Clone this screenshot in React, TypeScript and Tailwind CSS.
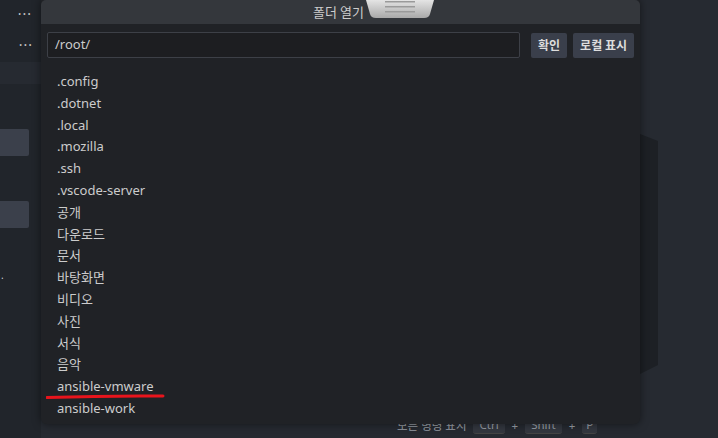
import React from "react";

const items = [
  ".config",
  ".dotnet",
  ".local",
  ".mozilla",
  ".ssh",
  ".vscode-server",
  "공개",
  "다운로드",
  "문서",
  "바탕화면",
  "비디오",
  "사진",
  "서식",
  "음악",
  "ansible-vmware",
  "ansible-work",
];

const font = { fontFamily: '"Noto Sans", "Noto Sans CJK KR", sans-serif' };

export default function App() {
  return (
    <div
      className="relative w-[718px] h-[438px] overflow-hidden bg-[#262a31] text-[#cccccc]"
      style={font}
    >
      {/* background workbench */}
      <div className="flex h-full">
        <div className="w-[41px] h-full bg-[#21252b] flex flex-col">
          <div className="h-[26px] flex items-center justify-end pr-[9px] text-[14px] tracking-[1px] text-[#c5c5c5]">···</div>
          <div className="h-[36px] flex items-center justify-end pr-[8px] text-[14px] tracking-[1px] text-[#c5c5c5]">···</div>
          <div className="h-[22px] bg-[#262a31]"></div>
          <div className="h-[45px]"></div>
          <div className="h-[27px] w-[29px] bg-[#3b404b] rounded-r-[2px]"></div>
          <div className="h-[45px]"></div>
          <div className="h-[27px] w-[29px] bg-[#3b404b] rounded-r-[2px]"></div>
          <div className="h-[40px]"></div>
          <div className="text-[10px] pl-[1px]">.</div>
        </div>
        <div className="flex-1 relative">
          {/* bottom hint */}
          <div className="absolute left-[356px] top-[416px] flex items-center gap-[7px] text-[11.5px] text-[#9aa0a8]">
            <span>모든 명령 표시</span>
            <span className="px-[6px] bg-[#33373f] rounded-[3px] border-b border-[#444]">Ctrl</span>
            <span>+</span>
            <span className="px-[6px] bg-[#33373f] rounded-[3px] border-b border-[#444]">Shift</span>
            <span>+</span>
            <span className="px-[4px] bg-[#33373f] rounded-[3px] border-b border-[#444]">P</span>
          </div>
          {/* dark side shape */}
          <div
            className="absolute left-[599px] top-[134px] w-[18px] h-[240px] bg-[#1d2025]"
            style={{ clipPath: "polygon(0 0, 100% 7px, 100% calc(100% - 9px), 0 100%)" }}
          ></div>
        </div>
      </div>

      {/* modal */}
      <div className="absolute left-[41px] top-0 w-[599px] h-[424px] bg-[#202226] rounded-b-[6px] shadow-[0_0_8px_rgba(0,0,0,0.5)] flex flex-col">
        <div className="h-[24px] bg-[#34373c] rounded-t-[5px] flex items-center justify-center text-[13px] text-[#cccccc]">
          <span className="mr-[4px]" style={{ fontFamily: '"Noto Sans CJK KR", sans-serif' }}>폴더 열기</span>
        </div>
        <div className="flex items-center px-[6px] pt-[8px]">
          <div className="w-[473px] h-[26px] bg-[#1d1e21] border border-[#3d4047] rounded-[2px] flex items-center pl-[7px] text-[13px] text-[#cccccc]">
            /root/
          </div>
          <div className="ml-[11px] h-[25px] px-[7px] bg-[#3a3f4b] rounded-[2px] flex items-center text-[12px] font-bold text-[#dddddd]" style={{ fontFamily: '"Noto Sans CJK KR", sans-serif' }}>
            확인
          </div>
          <div className="ml-[6px] h-[25px] px-[7px] bg-[#3a3f4b] rounded-[2px] flex items-center text-[12px] font-bold text-[#dddddd]" style={{ fontFamily: '"Noto Sans CJK KR", sans-serif' }}>
            로컬 표시
          </div>
        </div>
        <div className="flex flex-col pl-[16px] pt-[13px]">
          {items.map((it) => (
            <div key={it} className="relative h-[21.8px] leading-[21.8px] text-[13px] text-[#cccccc]">
              {it}
              {it === "ansible-vmware" && (
                <svg className="absolute left-[-11px] top-[18px]" width="120" height="6" viewBox="0 0 120 6">
                  <path d="M1 3.5 Q 60 1.5 117 2" stroke="#e8141c" strokeWidth="3" fill="none" strokeLinecap="round" />
                </svg>
              )}
            </div>
          ))}
        </div>
      </div>

      {/* drag handle overlay */}
      <div className="absolute left-[366px] top-0 w-[68px] h-[18px]">
        <svg width="68" height="18" viewBox="0 0 68 18">
          <defs>
            <linearGradient id="hg" x1="0" y1="0" x2="0" y2="1">
              <stop offset="0" stopColor="#e4e4e4" />
              <stop offset="1" stopColor="#a9a9a9" />
            </linearGradient>
          </defs>
          <path d="M0 0 H68 L64 14 Q63 18 58 18 H10 Q5 18 4 14 Z" fill="url(#hg)" />
          <rect x="19" y="1" width="30" height="1.5" fill="#9a9a9a" />
          <rect x="19" y="6" width="30" height="1.5" fill="#9a9a9a" />
          <rect x="19" y="11" width="30" height="1.5" fill="#9a9a9a" />
        </svg>
      </div>
    </div>
  );
}
